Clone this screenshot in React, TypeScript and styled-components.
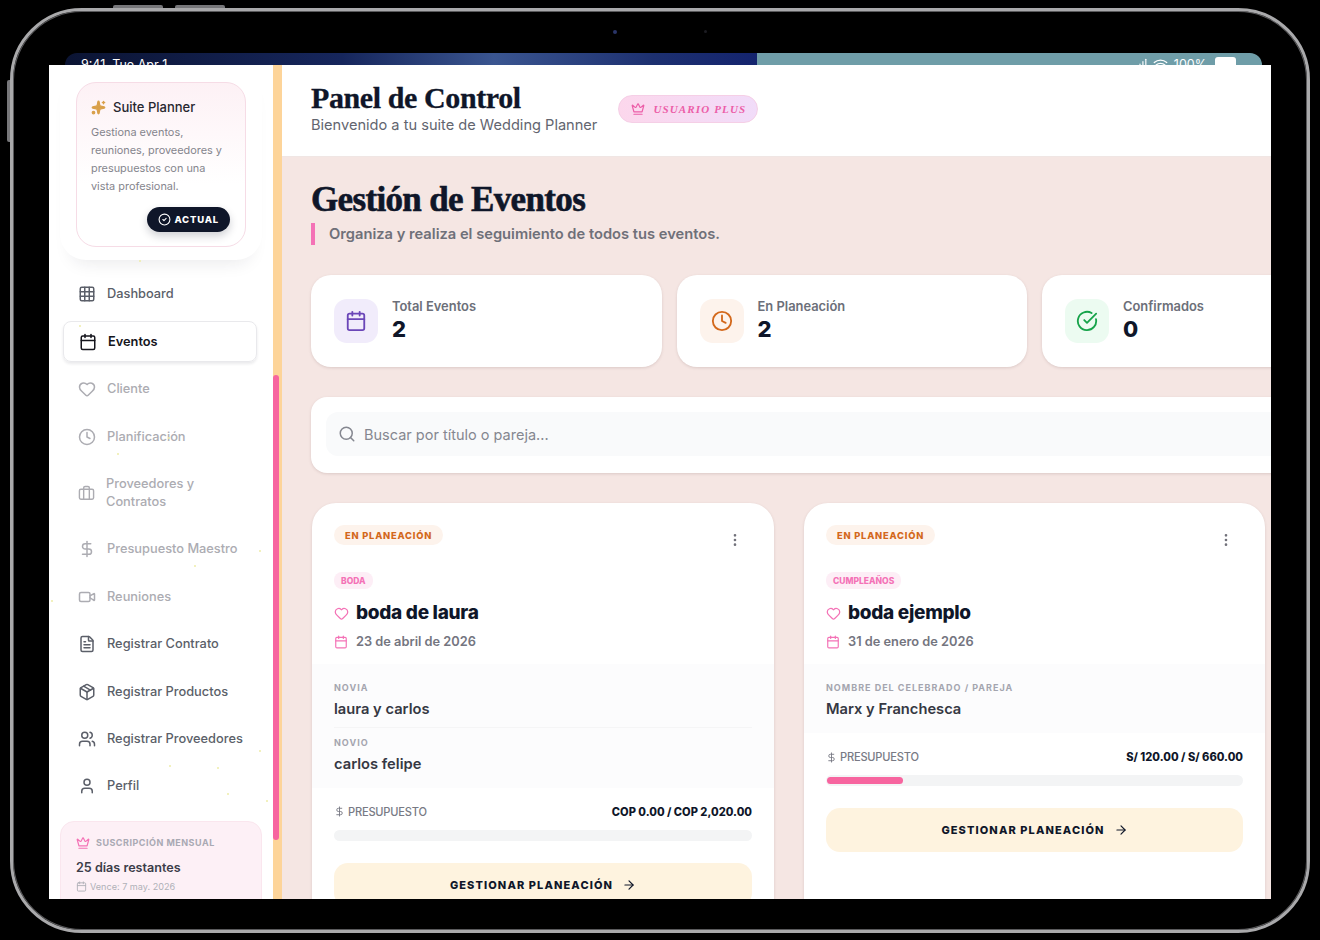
import React, { FunctionComponent } from 'react'
import styled, { createGlobalStyle } from 'styled-components'
import {
  ArrowRight, Briefcase, Calendar, CircleCheckBig, Clock, Crown, DollarSign, EllipsisVertical,
  FileText, Grid3x3, Heart, Package, Search, Signal, Sparkles, User, Users, Video, CircleCheck, Wifi, LucideIcon,
} from 'lucide-react'

const ink = '#0f1629'
const pink = '#f472b6'
const sans = '"Inter", "Liberation Sans", sans-serif'
const serif = '"Liberation Serif", "DejaVu Serif", serif'

const Global = createGlobalStyle`
  html, body { margin: 0; padding: 0; background: #000; }
  body { font-family: ${sans}; width: 1320px; height: 940px; overflow: hidden; }
  * { box-sizing: border-box; }
`

const Device = styled.div`
  position: relative;
  width: 1300px;
  height: 925px;
  margin: 8px 0 0 10px;
  padding: 42px 36px 30px 36px;
  background: #000;
  border: 3px solid #a9a9ab;
  border-radius: 72px;
  box-shadow: inset 0 0 0 1px #5a5a5c;
  display: flex;
  flex-direction: column;
`

const TopButton = styled.i<{ $left: number; $width: number }>`
  position: absolute;
  top: -6px;
  left: ${p => p.$left}px;
  width: ${p => p.$width}px;
  height: 3px;
  border-radius: 2px 2px 0 0;
  background: #77777a;
`

const SideButton = styled.i`
  position: absolute;
  left: -6px;
  top: 69px;
  width: 3px;
  height: 62px;
  border-radius: 2px 0 0 2px;
  background: #77777a;
`

const Lens = styled.i<{ $left: number; $size: number; $color: string }>`
  position: absolute;
  top: 19px;
  left: ${p => p.$left}px;
  width: ${p => p.$size}px;
  height: ${p => p.$size}px;
  border-radius: 50%;
  background: ${p => p.$color};
`

const TopEdge = styled.div`
  display: flex;
  height: 12px;
  margin: 0 9px 0 16px;
  border-radius: 22px 22px 0 0;
  overflow: hidden;
  flex: none;
  color: #fff;
  font-size: 12.5px;
  line-height: 16px;
`

const Wallpaper = styled.div`
  width: 692px;
  height: 100%;
  padding: 4px 0 0 16px;
  white-space: pre;
  background: linear-gradient(90deg, #0b1433 0%, #16265c 40%, #3a5590 62%, #1d3070 85%, #14246e 100%);
`

const StatusBar = styled.div`
  flex: 1;
  height: 100%;
  display: flex;
  justify-content: flex-end;
  align-items: flex-start;
  gap: 6px;
  padding: 4px 26px 0 0;
  background: #6f9da8;
`

const BatteryShape = styled.i`
  width: 21px;
  height: 12px;
  margin-left: 2px;
  border-radius: 3px;
  background: #fff;
`

const Screen = styled.div`
  flex: none;
  height: 834px;
  display: flex;
  background: #fff;
  overflow: hidden;
`

const Sidebar = styled.aside`
  position: relative;
  width: 224px;
  flex: none;
  display: flex;
  flex-direction: column;
  overflow: hidden;
  padding: 0 16px 0 14px;
`

const PlannerGlow = styled.div`
  flex: none;
  margin: 5px -5px 0 -3px;
  padding: 12px 16px 13px;
  border-radius: 0 0 26px 26px;
  box-shadow: 0 14px 18px -12px rgba(30, 30, 50, 0.1);
`

const PlannerCard = styled.div`
  display: flex;
  flex-direction: column;
  height: 165px;
  padding: 15px 14px 14px;
  border: 1px solid #f6dce6;
  border-radius: 20px;
  background: linear-gradient(180deg, #fdf1f5 0%, #fff 62%);
`

const PlannerTitle = styled.div`
  display: flex;
  align-items: center;
  gap: 7px;
  font-size: 13px;
  font-weight: 500;
  line-height: 18px;
  color: #27272f;
`

const PlannerText = styled.p`
  margin: 7px 0 0;
  font-size: 10.9px;
  line-height: 18px;
  color: #85858d;
`

const ActualBadge = styled.span`
  align-self: flex-end;
  display: flex;
  align-items: center;
  gap: 3px;
  height: 25px;
  margin: 12px 1px 0 0;
  padding: 0 11px;
  border-radius: 13px;
  background: ${ink};
  color: #fff;
  font-size: 9.5px;
  font-weight: 800;
  letter-spacing: 0.8px;
  box-shadow: 0 4px 8px rgba(15, 22, 41, 0.2);
`

const Nav = styled.nav`
  display: flex;
  flex-direction: column;
  gap: 6.4px;
  margin-top: 13px;
`

const NavItem = styled.div<{ $active?: boolean; $faded?: boolean }>`
  display: flex;
  align-items: center;
  gap: 11px;
  border-radius: 8px;
  font-size: 12.8px;
  line-height: 18px;
  white-space: pre-line;
  font-weight: ${p => (p.$active ? 600 : 500)};
  color: ${p => (p.$active ? '#15151c' : p.$faded ? '#acacb2' : '#5b5f69')};
  border: ${p => (p.$active ? '1px solid #e9e9ec' : 'none')};
  padding: ${p => (p.$active ? '10.5px 8px 10.5px 15px' : '11.5px 8px 11.5px 15px')};
  margin-top: ${p => (p.$active ? '1px' : '0')};
  box-shadow: ${p => (p.$active ? '0 2px 3px rgba(20, 20, 40, 0.09)' : 'none')};
  svg { flex: none; }
`

const SubCard = styled.div`
  flex: none;
  margin: 14px -5px 0 -3px;
  height: 100px;
  padding: 13px 15px;
  border: 1px solid #fae6ee;
  border-radius: 14px 14px 0 0;
  background: #fdf0f6;
`

const SubLabel = styled.div`
  display: flex;
  align-items: center;
  gap: 6px;
  font-size: 9px;
  font-weight: 700;
  letter-spacing: 0.5px;
  color: #a9a9b3;
  line-height: 16px;
`

const SubDays = styled.div`
  margin-top: 8px;
  font-size: 12.6px;
  font-weight: 600;
  line-height: 18px;
  color: #3b3d49;
`

const SubDue = styled.div`
  display: flex;
  align-items: center;
  gap: 3px;
  margin-top: 2px;
  font-size: 9.1px;
  line-height: 16px;
  color: #b0b0b8;
`

const Speck = styled.i<{ $x: number; $y: number }>`
  position: absolute;
  left: ${p => p.$x}px;
  top: ${p => p.$y}px;
  width: 2px;
  height: 2px;
  border-radius: 50%;
  background: #eeeca8;
`

const Scrollbar = styled.div`
  position: relative;
  width: 9px;
  flex: none;
  background: #fdd499;
`

const ScrollThumb = styled.div`
  position: absolute;
  left: 0;
  top: 310px;
  width: 6px;
  height: 465px;
  border-radius: 3px;
  background: #f7659f;
`

const Main = styled.main`
  flex: 1;
  min-width: 0;
  display: flex;
  flex-direction: column;
  overflow: hidden;
  background: #f5e6e3;
`

const Header = styled.header`
  flex: none;
  height: 92px;
  display: flex;
  align-items: flex-start;
  gap: 21px;
  padding: 15px 29px;
  background: #fff;
  border-bottom: 1px solid #f0e6e4;
`

const HeaderTitle = styled.h1`
  margin: 0;
  font-family: ${serif};
  font-size: 30px;
  font-weight: 700;
  line-height: 35px;
  color: ${ink};
  letter-spacing: -0.4px;
  -webkit-text-stroke: 0.3px ${ink};
`

const HeaderSub = styled.div`
  font-size: 14.6px;
  line-height: 20px;
  color: #62656f;
`

const PlusBadge = styled.span`
  display: flex;
  align-items: center;
  gap: 8px;
  height: 28px;
  margin-top: 15px;
  padding: 0 11px 0 12px;
  border: 1px solid #f5cfe6;
  border-radius: 14px;
  background: linear-gradient(90deg, #fcd7ec, #f1dcf9);
  color: #ec5ea8;
  font-family: ${serif};
  font-style: italic;
  font-weight: 700;
  font-size: 11px;
  letter-spacing: 1.15px;
`

const Content = styled.div`
  flex: 1;
  padding: 22px 0 0 29px;
  width: 1120px;
`

const PageTitle = styled.h2`
  margin: 0;
  font-family: ${serif};
  font-size: 35px;
  font-weight: 700;
  line-height: 42px;
  letter-spacing: -0.65px;
  color: ${ink};
  -webkit-text-stroke: 0.6px ${ink};
`

const PageSub = styled.p`
  margin: 2px 0 0;
  padding-left: 14px;
  border-left: 4px solid ${pink};
  font-size: 14.7px;
  font-weight: 600;
  line-height: 22px;
  color: #6f7079;
`

const StatRow = styled.div`
  display: grid;
  grid-template-columns: repeat(3, 350.5px);
  gap: 15px;
  margin-top: 30px;
`

const StatCard = styled.div`
  display: flex;
  align-items: center;
  gap: 14px;
  height: 92px;
  padding: 0 23px;
  border-radius: 20px;
  background: #fff;
  box-shadow: 0 1px 3px rgba(120, 90, 90, 0.2);
`

const StatIcon = styled.div<{ $bg: string; $fg: string }>`
  width: 44px;
  height: 44px;
  border-radius: 13px;
  display: flex;
  align-items: center;
  justify-content: center;
  background: ${p => p.$bg};
  color: ${p => p.$fg};
`

const StatLabel = styled.div`
  font-size: 12.9px;
  font-weight: 600;
  line-height: 16px;
  color: #6c6f79;
`

const StatValue = styled.div`
  font-size: 22px;
  font-weight: 800;
  line-height: 28px;
  color: ${ink};
`

const SearchPanel = styled.div`
  margin-top: 30px;
  height: 76px;
  padding: 15px;
  border-radius: 16px 0 0 16px;
  background: #fff;
  box-shadow: 0 1px 3px rgba(120, 90, 90, 0.2);
`

const SearchField = styled.div`
  display: flex;
  align-items: center;
  gap: 8px;
  height: 44px;
  padding: 0 12px;
  border-radius: 12px;
  background: #f9fafb;
  color: #858790;
  font-size: 14.5px;
`

const CardRow = styled.div`
  display: grid;
  grid-template-columns: 462px 461px;
  align-items: start;
  gap: 30px;
  margin-top: 30px;
  margin-left: 1px;
`

const EventCard = styled.article`
  height: 420px;
  padding-top: 22px;
  border-radius: 24px 24px 0 0;
  background: #fff;
  box-shadow: 0 1px 3px rgba(120, 90, 90, 0.2);
`

const CardTop = styled.div`
  padding: 0 22px 12px;
`

const CardHead = styled.div`
  display: flex;
  justify-content: space-between;
  align-items: flex-start;
  padding-right: 9px;
  color: #71717a;
`

const Status = styled.span`
  display: inline-flex;
  align-items: center;
  height: 20px;
  padding: 0 11px;
  border-radius: 10px;
  background: #fdf3ec;
  color: #d3681b;
  font-size: 9.3px;
  font-weight: 800;
  letter-spacing: 0.8px;
`

const KebabSlot = styled.span`
  display: flex;
  margin-top: 7px;
`

const Kind = styled.span`
  display: inline-flex;
  align-items: center;
  height: 17px;
  margin-top: 24px;
  padding: 0 7px;
  border-radius: 8px;
  background: #fdeef6;
  color: ${pink};
  font-size: 8.5px;
  font-weight: 800;
`

const TitleLine = styled.div`
  display: flex;
  align-items: center;
  gap: 7px;
  margin-top: 10px;
  color: ${pink};
`

const EventName = styled.h3`
  margin: 0;
  font-size: 19px;
  font-weight: 800;
  line-height: 28px;
  letter-spacing: -0.3px;
  color: ${ink};
`

const DateLine = styled.div`
  display: flex;
  align-items: center;
  gap: 8px;
  margin-top: 5px;
  font-size: 12.8px;
  font-weight: 600;
  line-height: 20px;
  color: #74757f;
  svg { color: ${pink}; }
`

const People = styled.div`
  padding: 16px 22px 13px;
  background: #fcfcfd;
`

const Person = styled.div`
  & + & {
    margin-top: 6.5px;
    padding-top: 7px;
    border-top: 1px solid #f5f5f6;
  }
`

const PersonLabel = styled.div`
  font-size: 9px;
  font-weight: 700;
  line-height: 16px;
  letter-spacing: 1px;
  color: #a4a5af;
`

const PersonName = styled.div`
  margin-top: 2px;
  font-size: 14.7px;
  font-weight: 600;
  line-height: 22px;
  color: #353843;
`

const Budget = styled.div`
  padding: 15px 22px 0;
`

const BudgetHead = styled.div`
  display: flex;
  justify-content: space-between;
  align-items: center;
  font-size: 11.1px;
  line-height: 18px;
`

const BudgetLabel = styled.span`
  display: flex;
  align-items: center;
  gap: 3px;
  font-weight: 500;
  letter-spacing: -0.2px;
  color: #787a84;
`

const BudgetValue = styled.span`
  font-weight: 800;
  color: ${ink};
`

const Track = styled.div`
  height: 11px;
  margin-top: 9px;
  padding: 2px 1px;
  border-radius: 6px;
  background: #f3f4f5;
`

const Fill = styled.div`
  height: 100%;
  border-radius: 4px;
  background: #f7659f;
`

const ManageButton = styled.div`
  display: flex;
  align-items: center;
  justify-content: center;
  gap: 9px;
  height: 44px;
  margin-top: 22px;
  border-radius: 14px;
  background: #fef3df;
  color: ${ink};
  font-size: 11px;
  font-weight: 800;
  letter-spacing: 1.1px;
`

const navItems: { label: string; icon: LucideIcon; size?: number; active?: boolean; faded?: boolean }[] = [
  { label: 'Dashboard', icon: Grid3x3 },
  { label: 'Eventos', icon: Calendar, active: true },
  { label: 'Cliente', icon: Heart, faded: true },
  { label: 'Planificación', icon: Clock, faded: true },
  { label: 'Proveedores y\nContratos', icon: Briefcase, size: 17, faded: true },
  { label: 'Presupuesto Maestro', icon: DollarSign, faded: true },
  { label: 'Reuniones', icon: Video, faded: true },
  { label: 'Registrar Contrato', icon: FileText },
  { label: 'Registrar Productos', icon: Package },
  { label: 'Registrar Proveedores', icon: Users },
  { label: 'Perfil', icon: User },
]

const stats = [
  { label: 'Total Eventos', value: '2', icon: Calendar, bg: '#f1ecfb', fg: '#6b46b8' },
  { label: 'En Planeación', value: '2', icon: Clock, bg: '#fdf3ec', fg: '#d3681b' },
  { label: 'Confirmados', value: '0', icon: CircleCheckBig, bg: '#ecfbf1', fg: '#16a34a' },
]

const specks = [
  [90, 195], [30, 260], [119, 372], [68, 388], [210, 485], [145, 500], [2, 535], [120, 700], [168, 702], [217, 735],
  [178, 728], [210, 685],
]

const events = [
  {
    kind: 'BODA',
    name: 'boda de laura',
    date: '23 de abril de 2026',
    people: [
      { label: 'NOVIA', name: 'laura y carlos' },
      { label: 'NOVIO', name: 'carlos felipe' },
    ],
    budget: 'COP 0.00 / COP 2,020.00',
    progress: 0,
  },
  {
    kind: 'CUMPLEAÑOS',
    name: 'boda ejemplo',
    date: '31 de enero de 2026',
    people: [{ label: 'NOMBRE DEL CELEBRADO / PAREJA', name: 'Marx y Franchesca' }],
    budget: 'S/ 120.00 / S/ 660.00',
    progress: 18.2,
  },
]

const App: FunctionComponent = () => {
  return (
    <>
      <Global />
      <Device>
        <TopButton $left={100} $width={50} />
        <TopButton $left={162} $width={50} />
        <SideButton />
        <Lens $left={600} $size={4} $color="#2a3568" />
        <Lens $left={691} $size={3} $color="#1c1c22" />
        <TopEdge>
          <Wallpaper>{'9:41  Tue Apr 1'}</Wallpaper>
          <StatusBar>
            <Signal size={14} />
            <Wifi size={15} />
            <span>100%</span>
            <BatteryShape />
          </StatusBar>
        </TopEdge>
        <Screen>
          <Sidebar>
            <PlannerGlow>
              <PlannerCard>
                <PlannerTitle>
                  <Sparkles size={15} color="#d9a04a" fill="#d9a04a" />
                  Suite Planner
                </PlannerTitle>
                <PlannerText>
                  Gestiona eventos, reuniones, proveedores y presupuestos con una vista profesional.
                </PlannerText>
                <ActualBadge>
                  <CircleCheck size={13} />
                  ACTUAL
                </ActualBadge>
              </PlannerCard>
            </PlannerGlow>
            <Nav>
              {navItems.map(item => (
                <NavItem key={item.label} $active={item.active} $faded={item.faded}>
                  <item.icon size={item.size ?? 18} />
                  <span>{item.label}</span>
                </NavItem>
              ))}
            </Nav>
            <SubCard>
              <SubLabel>
                <Crown size={14} color={pink} />
                SUSCRIPCIÓN MENSUAL
              </SubLabel>
              <SubDays>25 días restantes</SubDays>
              <SubDue>
                <Calendar size={11} />
                Vence: 7 may. 2026
              </SubDue>
            </SubCard>
            {specks.map(([x, y]) => (
              <Speck key={`${x}-${y}`} $x={x} $y={y} />
            ))}
          </Sidebar>
          <Scrollbar>
            <ScrollThumb />
          </Scrollbar>
          <Main>
            <Header>
              <div>
                <HeaderTitle>Panel de Control</HeaderTitle>
                <HeaderSub>Bienvenido a tu suite de Wedding Planner</HeaderSub>
              </div>
              <PlusBadge>
                <Crown size={14} />
                USUARIO PLUS
              </PlusBadge>
            </Header>
            <Content>
              <PageTitle>Gestión de Eventos</PageTitle>
              <PageSub>Organiza y realiza el seguimiento de todos tus eventos.</PageSub>
              <StatRow>
                {stats.map(stat => (
                  <StatCard key={stat.label}>
                    <StatIcon $bg={stat.bg} $fg={stat.fg}>
                      <stat.icon size={22} />
                    </StatIcon>
                    <div>
                      <StatLabel>{stat.label}</StatLabel>
                      <StatValue>{stat.value}</StatValue>
                    </div>
                  </StatCard>
                ))}
              </StatRow>
              <SearchPanel>
                <SearchField>
                  <Search size={18} />
                  Buscar por título o pareja...
                </SearchField>
              </SearchPanel>
              <CardRow>
                {events.map(event => (
                  <EventCard key={event.name}>
                    <CardTop>
                      <CardHead>
                        <Status>EN PLANEACIÓN</Status>
                        <KebabSlot>
                          <EllipsisVertical size={16} />
                        </KebabSlot>
                      </CardHead>
                      <Kind>{event.kind}</Kind>
                      <TitleLine>
                        <Heart size={15} />
                        <EventName>{event.name}</EventName>
                      </TitleLine>
                      <DateLine>
                        <Calendar size={14} />
                        {event.date}
                      </DateLine>
                    </CardTop>
                    <People>
                      {event.people.map(person => (
                        <Person key={person.label}>
                          <PersonLabel>{person.label}</PersonLabel>
                          <PersonName>{person.name}</PersonName>
                        </Person>
                      ))}
                    </People>
                    <Budget>
                      <BudgetHead>
                        <BudgetLabel>
                          <DollarSign size={11} />
                          PRESUPUESTO
                        </BudgetLabel>
                        <BudgetValue>{event.budget}</BudgetValue>
                      </BudgetHead>
                      <Track>
                        {event.progress > 0 && <Fill style={{ width: `${event.progress}%` }} />}
                      </Track>
                      <ManageButton>
                        GESTIONAR PLANEACIÓN
                        <ArrowRight size={14} />
                      </ManageButton>
                    </Budget>
                  </EventCard>
                ))}
              </CardRow>
            </Content>
          </Main>
        </Screen>
      </Device>
    </>
  )
}

export default App
